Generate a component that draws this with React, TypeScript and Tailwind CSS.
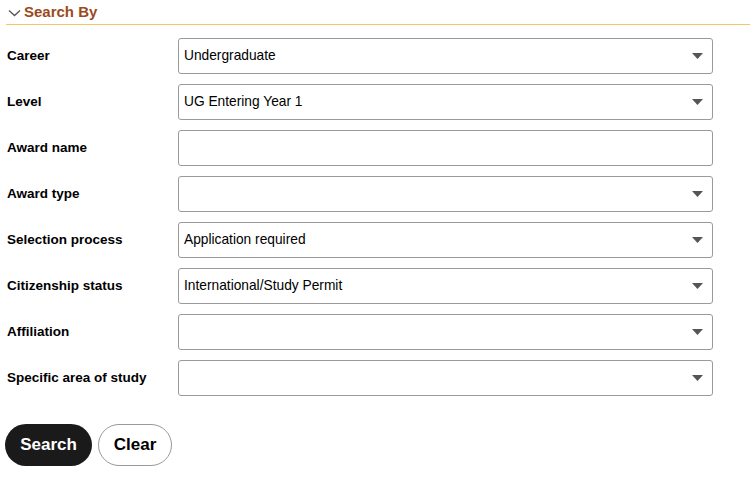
import React from "react";

const rows: { label: string; value: string; select: boolean }[] = [
  { label: "Career", value: "Undergraduate", select: true },
  { label: "Level", value: "UG Entering Year 1", select: true },
  { label: "Award name", value: "", select: false },
  { label: "Award type", value: "", select: true },
  { label: "Selection process", value: "Application required", select: true },
  { label: "Citizenship status", value: "International/Study Permit", select: true },
  { label: "Affiliation", value: "", select: true },
  { label: "Specific area of study", value: "", select: true },
];

export default function App() {
  return (
    <div
      className="w-[750px] h-[486px] bg-white text-black overflow-hidden"
      style={{ fontFamily: '"Liberation Sans", Arial, sans-serif' }}
    >
      <div className="pl-[6px]">
        <div className="h-[25px] border-b border-[#f3c862] flex items-center pb-[2px]">
          <svg width="13" height="8" viewBox="0 0 13 8" className="ml-[2px] mr-[3px] mt-[3px]">
            <path d="M1 1.5 L6.5 6.5 L12 1.5" fill="none" stroke="#555" strokeWidth="1.3" />
          </svg>
          <span className="text-[15px] font-bold text-[#9b4a1c] leading-none">Search By</span>
        </div>
        <div className="mt-[13px] flex flex-col gap-[10px]">
          {rows.map((r) => (
            <div key={r.label} className="flex items-center h-[36px]">
              <div className="w-[172px] pl-[1px] pt-[1px] text-[13.5px] font-bold">{r.label}</div>
              <div className="w-[535px] h-[36px] border border-[#9a9a9a] rounded-[3px] flex items-center justify-between pl-[5px] pr-[9px]">
                <span className="text-[13.75px]">{r.value}</span>
                {r.select && (
                  <svg width="11" height="6" viewBox="0 0 11 6">
                    <path d="M0 0 L11 0 L5.5 6 Z" fill="#555" />
                  </svg>
                )}
              </div>
            </div>
          ))}
        </div>
        <div className="mt-[28px] flex gap-[6px] -ml-[1px]">
          <button className="h-[42px] w-[87px] rounded-full bg-[#1a1a1a] text-white text-[17px] font-bold">
            Search
          </button>
          <button className="h-[42px] w-[74px] rounded-full border border-[#9a9a9a] bg-white text-black text-[17px] font-bold">
            Clear
          </button>
        </div>
      </div>
    </div>
  );
}
